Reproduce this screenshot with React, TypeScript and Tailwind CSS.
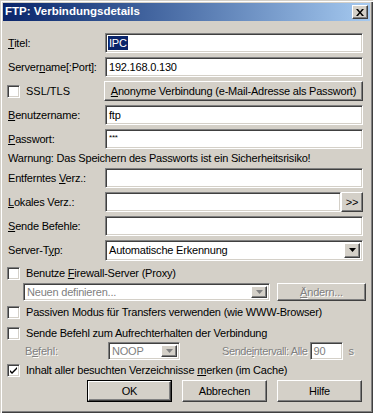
import React from "react"

const sunken = "border border-t-[#808080] border-l-[#808080] border-b-white border-r-white shadow-[inset_1px_1px_0_#404040,inset_-1px_-1px_0_#d4d0c8]"
const raised = "border border-t-white border-l-white border-b-[#404040] border-r-[#404040] shadow-[inset_-1px_-1px_0_#808080,inset_1px_1px_0_#d4d0c8] bg-[#d4d0c8]"
const dis = "text-[#808080] [text-shadow:1px_1px_0_#fff]"

const U = ({children}: {children: React.ReactNode}) => <span className="underline underline-offset-[1px]">{children}</span>

const Field = ({value, className = ""}: {value?: React.ReactNode, className?: string}) => (
    <div className={`h-[20px] bg-white flex items-center pl-[3px] ${sunken} ${className}`}>{value}</div>
)

const Arrow = ({disabled}: {disabled?: boolean}) => (
    <div className={`w-[16px] h-full flex items-center justify-center ${raised}`}>
        <svg width="7" height="4" viewBox="0 0 7 4"><path d="M0 0h7L3.5 4z" fill={disabled ? "#808080" : "#000"} /></svg>
    </div>
)

const Check = ({checked}: {checked?: boolean}) => (
    <div className={`w-[13px] h-[13px] bg-white shrink-0 flex items-center justify-center ${sunken}`}>
        {checked && <svg width="7" height="7" viewBox="0 0 7 7"><path d="M0 3l2 2 5-5v2l-5 5-2-2z" fill="#000" /></svg>}
    </div>
)

const Row = ({label, children}: {label: React.ReactNode, children: React.ReactNode}) => (
    <div className="flex items-center h-[20px] mt-[4px]">
        <div className="w-[97px] shrink-0">{label}</div>
        {children}
    </div>
)

const CheckRow = ({checked, children, className = ""}: {checked?: boolean, children: React.ReactNode, className?: string}) => (
    <div className={`flex items-center gap-[6px] h-[16px] -ml-[1px] ${className}`}>
        <Check checked={checked} />
        <span>{children}</span>
    </div>
)

const Button = ({children}: {children: React.ReactNode}) => (
    <div className={`w-[85px] h-[22px] flex items-center justify-center ${raised}`}>{children}</div>
)

export default function App(){
    return(
        <div className="w-[373px] h-[413px] bg-[#d4d0c8] text-black font-['Liberation_Sans',Arial,sans-serif] text-[11px] tracking-[-0.2px] shadow-[inset_1px_1px_0_#d4d0c8,inset_2px_2px_0_#fff,inset_-1px_-1px_0_#404040,inset_-2px_-2px_0_#808080] overflow-hidden">
            <div className="mx-[3px] mt-[3px] h-[18px] bg-linear-to-r from-[#0a246a] to-[#a6caf0] flex items-center justify-between pl-[2px] pr-[2px]">
                <span className="text-white font-bold text-[11.5px] tracking-normal">FTP: Verbindungsdetails</span>
                <div className={`w-[16px] h-[14px] flex items-center justify-center ${raised}`}>
                    <svg width="8" height="7" viewBox="0 0 8 7"><path d="M0 0h2l2 2.5L6 0h2L5 3.5 8 7H6L4 4.5 2 7H0l3-3.5z" fill="#000" /></svg>
                </div>
            </div>

            <div className="pl-[8px] pr-[10px] pt-[8px]">
                <Row label={<><U>T</U>itel:</>}>
                    <Field className="flex-1 !pl-[2px]" value={<span className="bg-[#0a246a] text-white px-[1px] leading-[14px]">IPC</span>} />
                </Row>
                <Row label={<>Server<U>n</U>ame[:Port]:</>}>
                    <Field className="flex-1" value="192.168.0.130" />
                </Row>
                <div className="flex items-center h-[20px] mt-[4px]">
                    <div className="w-[97px] shrink-0 flex items-center gap-[6px] -ml-[1px]">
                        <Check />
                        <span className="tracking-normal">SSL/TLS</span>
                    </div>
                    <div className={`flex-1 h-[20px] flex items-center justify-center ${raised}`}>
                        <span><U>A</U>nonyme Verbindung (e-Mail-Adresse als Passwort)</span>
                    </div>
                </div>
                <Row label={<><U>B</U>enutzername:</>}>
                    <Field className="flex-1" value="ftp" />
                </Row>
                <Row label={<><U>P</U>asswort:</>}>
                    <Field className="flex-1 text-[8px] !items-start pt-[2px]" value="***" />
                </Row>
                <div className="h-[19px] flex items-center">Warnung: Das Speichern des Passworts ist ein Sicherheitsrisiko!</div>
                <div className="flex items-center h-[20px]">
                    <div className="w-[97px] shrink-0">Entferntes <U>V</U>erz.:</div>
                    <Field className="flex-1" />
                </div>
                <Row label={<><U>L</U>okales Verz.:</>}>
                    <Field className="flex-1" />
                    <div className={`w-[22px] h-[20px] flex items-center justify-center ${raised}`}>&gt;&gt;</div>
                </Row>
                <Row label={<><U>S</U>ende Befehle:</>}>
                    <Field className="flex-1" />
                </Row>
                <Row label={<>Server-T<U>y</U>p:</>}>
                    <div className={`flex-1 h-[21px] bg-white flex items-center p-[2px] ${sunken}`}>
                        <span className="flex-1 pl-[1px]">Automatische Erkennung</span>
                        <Arrow />
                    </div>
                </Row>

                <CheckRow className="mt-[5px]"><>Benutze <U>F</U>irewall-Server (Proxy)</></CheckRow>
                <div className="flex items-center h-[18px] mt-[2px] pl-[15px] -mr-[3px]">
                    <div className={`w-[247px] h-[18px] bg-white flex items-center p-[2px] ${sunken}`}>
                        <span className={`flex-1 pl-[1px] ${dis}`}>Neuen definieren...</span>
                        <Arrow disabled />
                    </div>
                    <div className={`ml-[7px] flex-1 h-[18px] flex items-center justify-center ${raised} ${dis}`}>
                        <span><U>Ä</U>ndern...</span>
                    </div>
                </div>
                <CheckRow className="mt-[3px]">Passiven Modus für Transfers verwenden (wie WWW-Browser)</CheckRow>
                <CheckRow className="mt-[5px]">Sende Befehl zum Aufrechterhalten der Verbindung</CheckRow>
                <div className="flex items-center h-[18px] mt-[1px] pl-[17px]">
                    <span className={`w-[83px] ${dis}`}>B<U>e</U>fehl:</span>
                    <div className={`w-[72px] h-[18px] bg-white flex items-center p-[2px] ${sunken}`}>
                        <span className={`flex-1 pl-[1px] ${dis}`}>NOOP</span>
                        <Arrow disabled />
                    </div>
                    <span className={`ml-[42px] tracking-[-0.4px] ${dis}`}>Sende<U>i</U>ntervall: Alle</span>
                    <div className={`ml-[2px] w-[33px] h-[18px] bg-white flex items-center pl-[3px] ${sunken} ${dis}`}>90</div>
                    <span className={`ml-[6px] ${dis}`}>s</span>
                </div>
                <CheckRow checked className="mt-[2px]">Inhalt aller besuchten Verzeichnisse <U>m</U>erken (im Cache)</CheckRow>

                <div className="flex justify-end gap-[10px] mt-[2px] pr-[1px]">
                    <div className="border border-black">
                        <div className={`w-[83px] h-[20px] flex items-center justify-center ${raised}`}>OK</div>
                    </div>
                    <Button>Abbrechen</Button>
                    <Button>Hilfe</Button>
                </div>
            </div>
        </div>
    )
}
